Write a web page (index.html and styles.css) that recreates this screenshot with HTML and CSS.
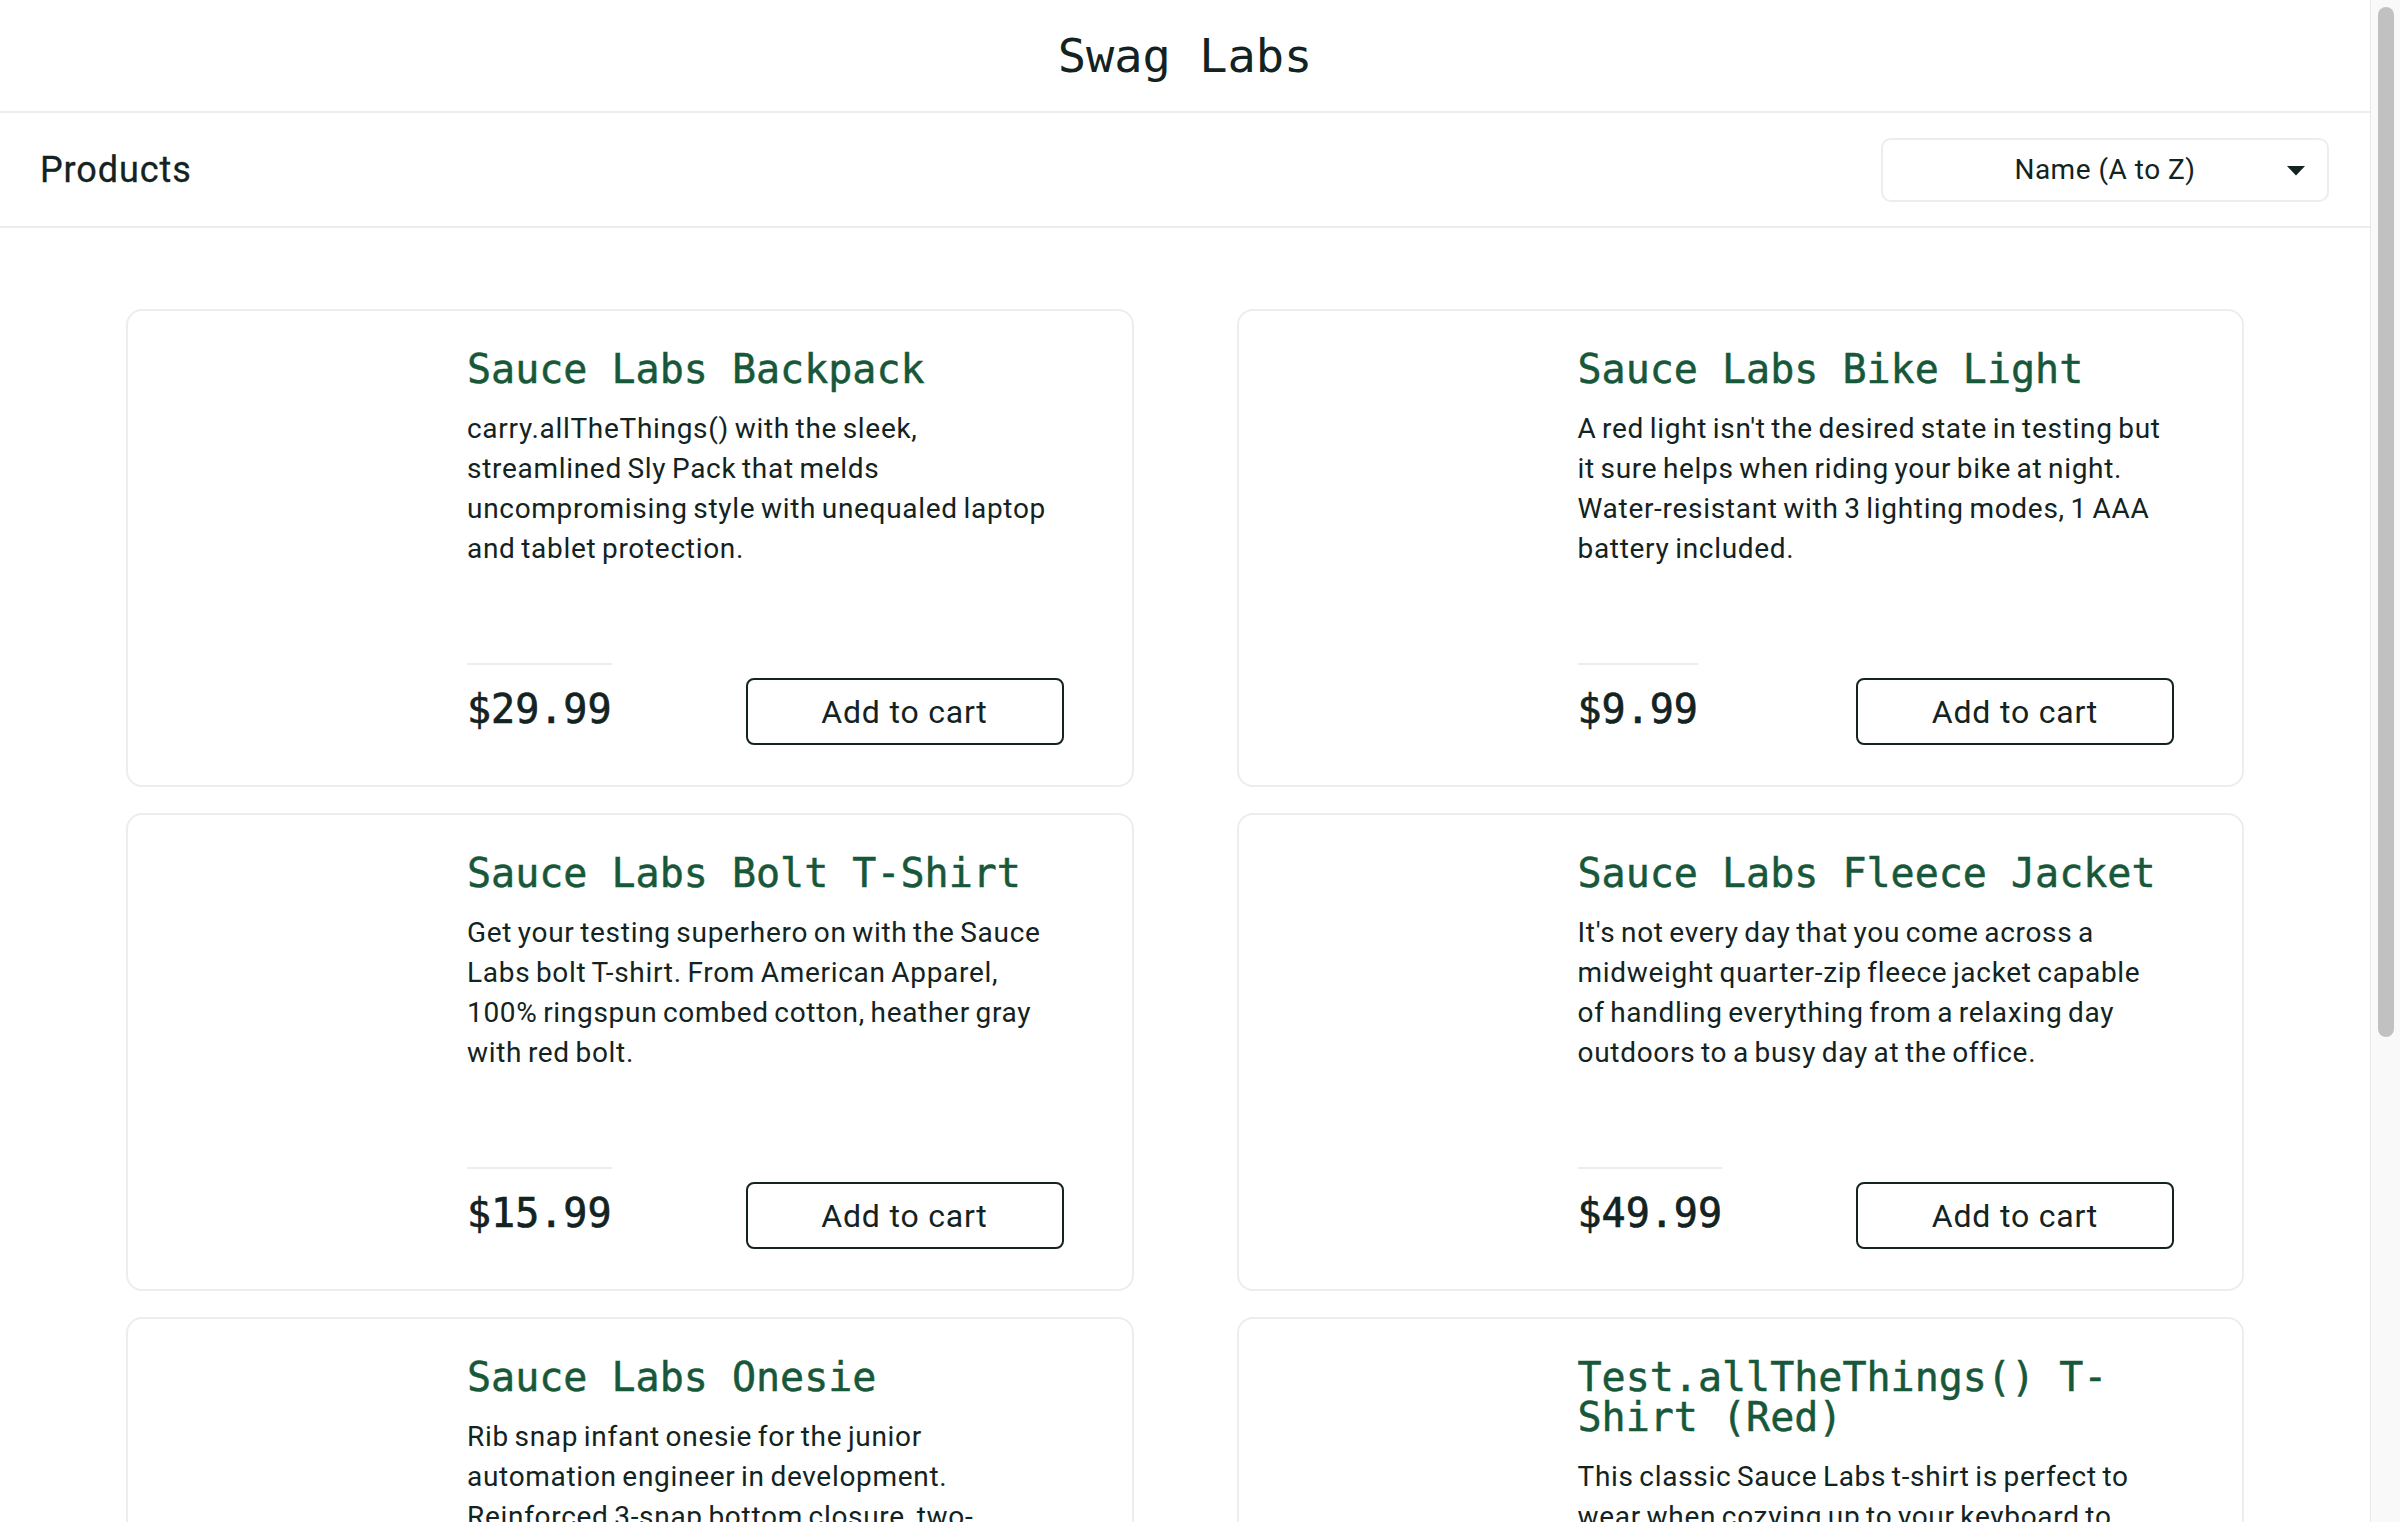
FILE: index.html
```html
<!DOCTYPE html>
<html lang="en">
<head>
<meta charset="utf-8">
<title>Swag Labs</title>
<link rel="stylesheet" href="styles.css">
</head>
<body>
<div class="page">
  <header class="primary-header">
    <div class="app-logo">Swag Labs</div>
  </header>
  <div class="secondary-header">
    <span class="title">Products</span>
    <div class="sort-select">
      <span class="sort-label">Name (A to Z)</span>
      <svg class="sort-caret" width="18" height="10" viewBox="0 0 18 10"><polygon points="0,0 18,0 9,9.5" fill="#132322"/></svg>
    </div>
  </div>
  <main class="inventory">
    <div class="item">
      <div class="item-img"></div>
      <div class="item-body">
        <div class="item-name">Sauce Labs Backpack</div>
        <div class="item-desc">carry.allTheThings() with the sleek, streamlined Sly Pack that melds uncompromising style with unequaled laptop and tablet protection.</div>
        <div class="pricebar">
          <div class="price">$29.99</div>
          <button class="btn">Add to cart</button>
        </div>
      </div>
    </div>
    <div class="item">
      <div class="item-img"></div>
      <div class="item-body">
        <div class="item-name">Sauce Labs Bike Light</div>
        <div class="item-desc">A red light isn't the desired state in testing but it sure helps when riding your bike at night. Water-resistant with 3 lighting modes, 1 AAA battery included.</div>
        <div class="pricebar">
          <div class="price">$9.99</div>
          <button class="btn">Add to cart</button>
        </div>
      </div>
    </div>
    <div class="item">
      <div class="item-img"></div>
      <div class="item-body">
        <div class="item-name">Sauce Labs Bolt T-Shirt</div>
        <div class="item-desc">Get your testing superhero on with the Sauce Labs bolt T-shirt. From American Apparel, 100% ringspun combed cotton, heather gray with red bolt.</div>
        <div class="pricebar">
          <div class="price">$15.99</div>
          <button class="btn">Add to cart</button>
        </div>
      </div>
    </div>
    <div class="item">
      <div class="item-img"></div>
      <div class="item-body">
        <div class="item-name">Sauce Labs Fleece Jacket</div>
        <div class="item-desc">It's not every day that you come across a midweight quarter-zip fleece jacket capable of handling everything from a relaxing day outdoors to a busy day at the office.</div>
        <div class="pricebar">
          <div class="price">$49.99</div>
          <button class="btn">Add to cart</button>
        </div>
      </div>
    </div>
    <div class="item">
      <div class="item-img"></div>
      <div class="item-body">
        <div class="item-name">Sauce Labs Onesie</div>
        <div class="item-desc">Rib snap infant onesie for the junior automation engineer in development. Reinforced 3-snap bottom closure, two-needle hemmed sleeved and bottom won't unravel.</div>
        <div class="pricebar">
          <div class="price">$7.99</div>
          <button class="btn">Add to cart</button>
        </div>
      </div>
    </div>
    <div class="item">
      <div class="item-img"></div>
      <div class="item-body">
        <div class="item-name">Test.allTheThings() T-Shirt (Red)</div>
        <div class="item-desc">This classic Sauce Labs t-shirt is perfect to wear when cozying up to your keyboard to automate a few tests. Super-soft and comfy ringspun combed cotton.</div>
        <div class="pricebar">
          <div class="price">$15.99</div>
          <button class="btn">Add to cart</button>
        </div>
      </div>
    </div>
  </main>
</div>
<div class="scrollbar"><div class="scrollbar-thumb"></div></div>
</body>
</html>
```
FILE: styles.css
```css
html, body {
  margin: 0;
  padding: 0;
  background: #ffffff;
}

html {
  scrollbar-width: none;
}
::-webkit-scrollbar {
  width: 0;
  height: 0;
}

.page {
  margin-right: 30px;
  color: #132322;
  font-family: Roboto, "Liberation Sans", sans-serif;
}

/* window scrollbar, drawn over the right edge */
.scrollbar {
  position: fixed;
  top: 0;
  right: 0;
  width: 29px;
  height: 100vh;
  background: #f9f9f9;
  border-left: 1px solid #e8e8e8;
}

.scrollbar-thumb {
  position: absolute;
  top: 7px;
  left: 7px;
  width: 16px;
  height: 1030px;
  border-radius: 8px;
  background: #c1c1c1;
}

.primary-header {
  height: 111px;
  border-bottom: 2px solid #ededed;
  display: flex;
  align-items: center;
  justify-content: center;
}

.app-logo {
  font-family: "DejaVu Sans Mono", "Liberation Mono", monospace;
  font-size: 47px;
  line-height: 48px;
  color: #132322;
}

.secondary-header {
  height: 113px;
  border-bottom: 2px solid #ededed;
  display: flex;
  align-items: center;
  justify-content: space-between;
  padding: 0 41px 0 40px;
}

.title {
  font-size: 36px;
  font-weight: 400;
  letter-spacing: 0.9px;
  line-height: 48px;
  -webkit-text-stroke: 0.3px #132322;
}

.sort-select {
  position: relative;
  box-sizing: border-box;
  width: 448px;
  height: 64px;
  border: 2px solid #ededed;
  border-radius: 10px;
  display: flex;
  align-items: center;
  justify-content: center;
  font-size: 28px;
  letter-spacing: 0.5px;
}

.sort-caret {
  position: absolute;
  right: 22px;
  top: 26px;
}

.inventory {
  display: grid;
  grid-template-columns: 1fr 1fr;
  column-gap: 103px;
  row-gap: 26px;
  padding: 81px 126px 60px 126px;
}

.item {
  box-sizing: border-box;
  min-height: 478px;
  border: 2px solid #ededed;
  border-radius: 16px;
  display: flex;
  padding: 38px 68px 40px 0;
}

.item-img {
  width: 339px;
  flex: none;
}

.item-body {
  flex: 1;
  min-width: 0;
  display: flex;
  flex-direction: column;
}

.item-name {
  font-family: "DejaVu Sans Mono", "Liberation Mono", monospace;
  font-size: 40px;
  line-height: 40px;
  color: #18583a;
  -webkit-text-stroke: 0.5px #18583a;
}

.item-desc {
  margin-top: 20px;
  margin-right: 8px;
  font-size: 28px;
  letter-spacing: 0.7px;
  word-spacing: -2px;
  line-height: 40px;
}

.pricebar {
  margin-top: auto;
  padding-top: 40px;
  display: flex;
  justify-content: space-between;
  align-items: flex-end;
}

.price {
  border-top: 2px solid #ededed;
  padding: 24px 0 16px;
  font-family: "DejaVu Sans Mono", "Liberation Mono", monospace;
  font-size: 40px;
  line-height: 40px;
  -webkit-text-stroke: 0.7px #132322;
}

.btn {
  box-sizing: border-box;
  width: 318px;
  height: 67px;
  border: 2px solid #132322;
  border-radius: 8px;
  background: #ffffff;
  color: #132322;
  font-family: Roboto, "Liberation Sans", sans-serif;
  font-size: 32px;
  letter-spacing: 0.8px;
  padding: 0;
}
```
